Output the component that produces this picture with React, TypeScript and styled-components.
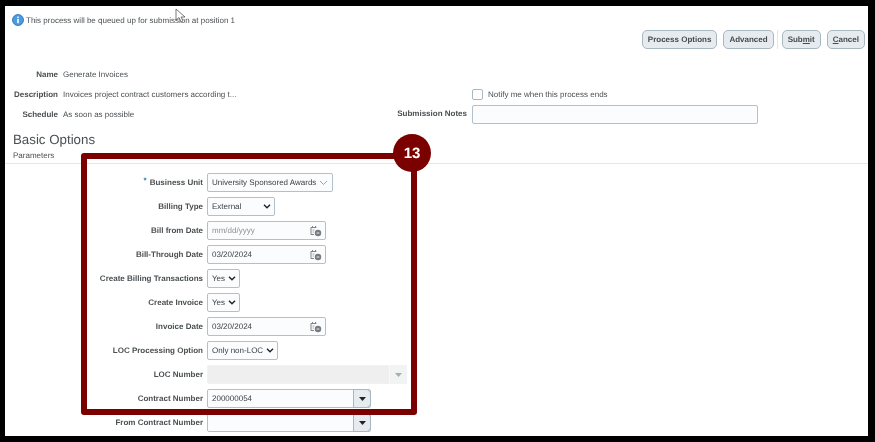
import React from 'react';
import styled, { createGlobalStyle } from 'styled-components';

const Global = createGlobalStyle`
  html, body {
    margin: 0;
    padding: 0;
    background: #000;
    overflow: hidden;
  }
  body {
    font-family: "Liberation Sans", Arial, sans-serif;
    font-size: 8px;
    text-rendering: geometricPrecision;
    color: #4a4f52;
  }
`;

const Frame = styled.div`
  width: 875px;
  height: 442px;
  padding: 6px 7px 6px 5px;
  box-sizing: border-box;
  filter: blur(0.3px);
`;

const Sheet = styled.div`
  position: relative;
  height: 430px;
  background: #fff;
  overflow: hidden;
`;

const Message = styled.div`
  display: flex;
  align-items: center;
  gap: 2px;
  height: 14px;
  padding: 7px 0 0 7px;
`;

const Toolbar = styled.div`
  display: flex;
  justify-content: flex-end;
  align-items: center;
  gap: 6px;
  padding-right: 3px;
  margin-top: 3px;
`;

const Button = styled.div`
  height: 17px;
  padding: 0 5px;
  display: flex;
  align-items: center;
  border: 1px solid #a9b7c1;
  border-radius: 5px;
  background: #e6ebef;
  font-weight: bold;
  color: #434a50;
`;

const Divider = styled.div`
  width: 1px;
  height: 19px;
  background: #e3e7ea;
  margin: 0 -2px 0 -3px;
`;

const Summary = styled.div`
  display: grid;
  grid-template-columns: 462px 1fr;
  margin-top: 15px;
`;

const InfoList = styled.div`
  display: grid;
  grid-template-columns: 53px 1fr;
  grid-auto-rows: 20px;
  column-gap: 5px;
  align-items: center;
`;

const InfoLabel = styled.div`
  text-align: right;
  font-weight: bold;
  white-space: nowrap;
`;

const Notes = styled.div`
  display: grid;
  grid-template-columns: 5px 286px;
  grid-auto-rows: 20px;
  margin-top: 20px;
  align-items: center;
`;

const Check = styled.label`
  grid-column: 2;
  display: flex;
  align-items: center;
  gap: 5px;
`;

const Box = styled.span`
  width: 9px;
  height: 9px;
  border: 1px solid #a9b7c1;
  border-radius: 2px;
  background: #fff;
`;

const NotesRow = styled.div`
  grid-column: 1 / 3;
  position: relative;
  display: flex;
  justify-content: flex-end;
`;

const NotesLabel = styled.span`
  position: absolute;
  right: 291px;
  top: 4px;
  font-weight: bold;
  white-space: nowrap;
`;

const NotesInput = styled.div`
  width: 284px;
  height: 17px;
  border: 1px solid #b3c0c9;
  border-radius: 2px;
  background: #fbfcfe;
`;

const Heading = styled.h2`
  margin: 7px 0 0 8px;
  font-size: 13.3px;
  line-height: 18px;
  font-weight: normal;
  color: #4a4f52;
`;

const SubHeading = styled.div`
  margin: 0 0 0 8px;
  line-height: 14px;
  color: #4a4f52;
`;

const Rule = styled.div`
  height: 1px;
  background: #e4e8eb;
`;

const Form = styled.div`
  display: grid;
  grid-auto-rows: 19px;
  row-gap: 5px;
  margin-top: 9px;
`;

const Row = styled.div`
  display: grid;
  grid-template-columns: 198px auto;
  column-gap: 4px;
  justify-content: start;
  align-items: center;
`;

const RowLabel = styled.div`
  text-align: right;
  font-weight: bold;
  white-space: nowrap;
`;

const Star = styled.span`
  color: #2f7fb8;
  margin-right: 3px;
  position: relative;
  top: -2px;
`;

const Field = styled.div<{ $w: number; $off?: boolean }>`
  width: ${({ $w }) => $w}px;
  height: 19px;
  box-sizing: border-box;
  display: flex;
  align-items: center;
  justify-content: space-between;
  padding-left: 4px;
  border: 1px solid ${({ $off }) => ($off ? '#f0f1f1' : '#b3c0c9')};
  border-radius: 2px;
  background: ${({ $off }) => ($off ? '#efefef' : '#fbfcfe')};
  color: #3c4144;
  white-space: nowrap;
`;

const Hint = styled.span`
  color: #8c9296;
`;

const Chevron = styled.svg<{ $gap?: number }>`
  margin-right: ${({ $gap }) => $gap ?? 3}px;
  flex: none;
`;

const DropButton = styled.div`
  width: 18px;
  height: 19px;
  margin-right: -1px;
  box-sizing: border-box;
  display: flex;
  align-items: center;
  justify-content: center;
  border: 1px solid #a9b7c1;
  border-radius: 0 5px 5px 0;
  background: #e6ebef;
`;

const DisabledButton = styled(DropButton)`
  border: 0;
  border-left: 1px solid #f8f8f8;
  border-radius: 0;
  background: #f2f3f3;
`;

const Highlight = styled.div`
  position: absolute;
  left: 76px;
  top: 147px;
  width: 336px;
  height: 262px;
  box-sizing: border-box;
  border: 6px solid #7b0000;
  border-radius: 3px;
`;

const Badge = styled.div`
  position: absolute;
  left: 388px;
  top: 128px;
  width: 38px;
  height: 38px;
  border-radius: 50%;
  background: #7b0000;
  color: #fff;
  font-size: 15px;
  font-weight: bold;
  display: flex;
  align-items: center;
  justify-content: center;
`;

const Pointer = styled.svg`
  position: absolute;
  left: 170px;
  top: 2px;
`;

const InfoIcon = () => (
  <svg width="12" height="12" viewBox="0 0 12 12">
    <circle cx="6" cy="6" r="5.5" fill="#4c9be0" stroke="#2a6aa8" strokeWidth="0.8" />
    <rect x="5.2" y="5" width="1.6" height="4.2" fill="#fff" />
    <rect x="5.2" y="2.6" width="1.6" height="1.5" fill="#fff" />
  </svg>
);

const Calendar = () => (
  <Chevron $gap={3} width="12" height="12" viewBox="0 0 12 12" fill="none">
    <path d="M1 2.5h5.5M1 2.5v7h3M2.5 1v2M5.5 1v2" stroke="#7d8589" strokeWidth="1" />
    <path d="M2.5 5h2M2.5 7h1.5" stroke="#a4aaae" strokeWidth="1" />
    <circle cx="8" cy="8" r="3.2" fill="#737b80" />
    <path d="M6.6 8h2.8" stroke="#e8ebed" strokeWidth="1" />
  </Chevron>
);

const Down = ({ gap }: { gap?: number }) => (
  <Chevron $gap={gap} width="8" height="5" viewBox="0 0 8 5" fill="none">
    <path d="M1 .8l3 3 3-3" stroke="#222" strokeWidth="1.4" />
  </Chevron>
);

const Triangle = ({ color }: { color: string }) => (
  <svg width="7" height="4" viewBox="0 0 7 4">
    <path d="M0 0h7L3.5 4z" fill={color} />
  </svg>
);

const App = () => (
  <Frame>
    <Global />
    <Sheet>
      <Message>
        <InfoIcon />
        <span>This process will be queued up for submission at position 1</span>
      </Message>

      <Toolbar>
        <Button>Process Options</Button>
        <Button>Advanced</Button>
        <Divider />
        <Button>
          <span>
            Sub<u>m</u>it
          </span>
        </Button>
        <Button>
          <span>
            <u>C</u>ancel
          </span>
        </Button>
      </Toolbar>

      <Summary>
        <InfoList>
          <InfoLabel>Name</InfoLabel>
          <div>Generate Invoices</div>
          <InfoLabel>Description</InfoLabel>
          <div>Invoices project contract customers according t...</div>
          <InfoLabel>Schedule</InfoLabel>
          <div>As soon as possible</div>
        </InfoList>
        <Notes>
          <Check>
            <Box />
            Notify me when this process ends
          </Check>
          <NotesRow>
            <NotesLabel>Submission Notes</NotesLabel>
            <NotesInput />
          </NotesRow>
        </Notes>
      </Summary>

      <Heading>Basic Options</Heading>
      <SubHeading>Parameters</SubHeading>
      <Rule />

      <Form>
        <Row>
          <RowLabel>
            <Star>*</Star>Business Unit
          </RowLabel>
          <Field $w={126}>
            University Sponsored Awards
            <Chevron $gap={4} width="9" height="6" viewBox="0 0 9 6" fill="none">
              <path d="M1 1l3.5 3.5L8 1" stroke="#9aa3a8" strokeWidth="1" />
            </Chevron>
          </Field>
        </Row>
        <Row>
          <RowLabel>Billing Type</RowLabel>
          <Field $w={68}>
            External
            <Down gap={3} />
          </Field>
        </Row>
        <Row>
          <RowLabel>Bill from Date</RowLabel>
          <Field $w={119}>
            <Hint>mm/dd/yyyy</Hint>
            <Calendar />
          </Field>
        </Row>
        <Row>
          <RowLabel>Bill-Through Date</RowLabel>
          <Field $w={119}>
            03/20/2024
            <Calendar />
          </Field>
        </Row>
        <Row>
          <RowLabel>Create Billing Transactions</RowLabel>
          <Field $w={33}>
            Yes
            <Down gap={3} />
          </Field>
        </Row>
        <Row>
          <RowLabel>Create Invoice</RowLabel>
          <Field $w={33}>
            Yes
            <Down gap={3} />
          </Field>
        </Row>
        <Row>
          <RowLabel>Invoice Date</RowLabel>
          <Field $w={119}>
            03/20/2024
            <Calendar />
          </Field>
        </Row>
        <Row>
          <RowLabel>LOC Processing Option</RowLabel>
          <Field $w={71}>
            Only non-LOC
            <Down gap={3} />
          </Field>
        </Row>
        <Row>
          <RowLabel>LOC Number</RowLabel>
          <Field $w={200} $off>
            <span />
            <DisabledButton>
              <Triangle color="#a9adb0" />
            </DisabledButton>
          </Field>
        </Row>
        <Row>
          <RowLabel>Contract Number</RowLabel>
          <Field $w={164}>
            200000054
            <DropButton>
              <Triangle color="#222" />
            </DropButton>
          </Field>
        </Row>
        <Row>
          <RowLabel>From Contract Number</RowLabel>
          <Field $w={164}>
            <span />
            <DropButton>
              <Triangle color="#222" />
            </DropButton>
          </Field>
        </Row>
      </Form>

      <Highlight />
      <Badge>13</Badge>
      <Pointer width="12" height="16" viewBox="0 0 12 16" fill="#fff">
        <path d="M1 1v11l3-2.5 2 4.5 2-1-2-4h4z" stroke="#555" strokeWidth="0.8" />
      </Pointer>
    </Sheet>
  </Frame>
);

export default App;
